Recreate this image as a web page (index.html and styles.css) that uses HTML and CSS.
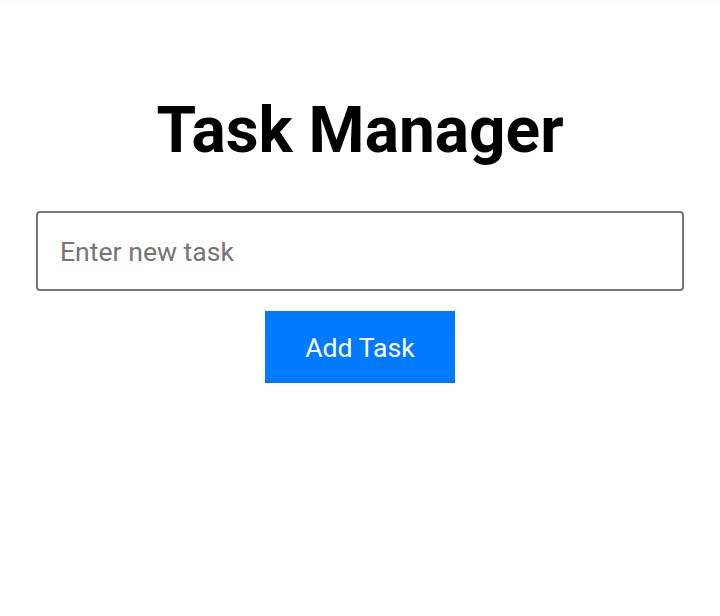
FILE: index.html
```html
<!DOCTYPE html>
<html lang="en">
<head>
<meta charset="utf-8">
<title>Task Manager</title>
<link rel="stylesheet" href="styles.css">
</head>
<body>
<div class="topbar"></div>
<main class="app">
  <h1 class="title">Task Manager</h1>
  <input class="task-input" type="text" placeholder="Enter new task">
  <button class="add-btn" type="button">Add Task</button>
</main>
</body>
</html>
```
FILE: styles.css
```css
html, body {
  margin: 0;
  padding: 0;
  background: #ffffff;
  font-family: Roboto, "Noto Sans", sans-serif;
}
.topbar {
  height: 0;
  box-shadow: 0 0 10px 2px rgba(0, 0, 0, 0.06);
}
.app {
  width: 90%;
  margin: 0 auto;
  display: flex;
  flex-direction: column;
  align-items: center;
  padding-top: 93px;
}
.title {
  margin: 0 0 43px;
  font-size: 64px;
  font-weight: 700;
  line-height: 75px;
  color: #000;
}
.task-input {
  box-sizing: border-box;
  width: 100%;
  height: 80px;
  padding: 0 22px;
  border: 2px solid #767676;
  border-radius: 4px;
  font-family: Roboto, sans-serif;
  font-size: 26.6px;
  color: #000;
  outline: none;
}
.task-input::placeholder {
  color: #757575;
}
.add-btn {
  margin-top: 20px;
  width: 190px;
  height: 72px;
  border: none;
  border-radius: 0;
  background: #007bff;
  color: #fff;
  font-family: Roboto, sans-serif;
  font-size: 26.6px;
  cursor: pointer;
}
```
